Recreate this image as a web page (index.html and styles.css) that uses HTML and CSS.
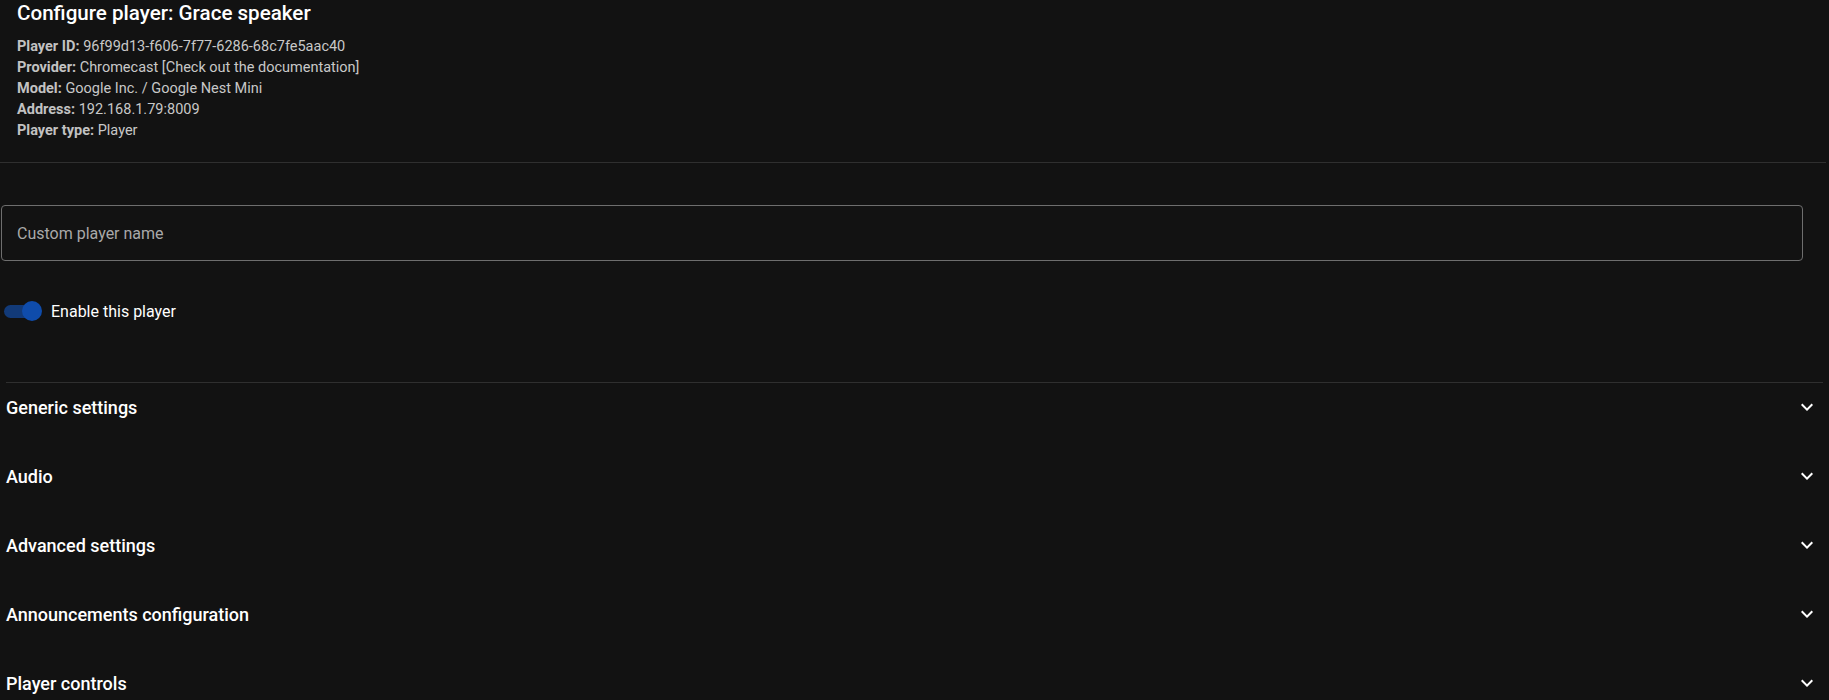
FILE: index.html
```html
<!DOCTYPE html>
<html lang="en">
<head>
<meta charset="utf-8">
<title>Configure player</title>
<link rel="stylesheet" href="styles.css">
</head>
<body>
<main class="page">
  <header class="player-head">
    <h1 class="title">Configure player: Grace speaker</h1>
    <div class="meta">
      <div class="meta-line"><b>Player ID:</b> 96f99d13-f606-7f77-6286-68c7fe5aac40</div>
      <div class="meta-line"><b>Provider:</b> Chromecast [Check out the documentation]</div>
      <div class="meta-line"><b>Model:</b> Google Inc. / Google Nest Mini</div>
      <div class="meta-line"><b>Address:</b> 192.168.1.79:8009</div>
      <div class="meta-line"><b>Player type:</b> Player</div>
    </div>
  </header>
  <hr class="divider">
  <section class="form">
    <div class="field"><span class="placeholder">Custom player name</span></div>
    <div class="switch-row">
      <span class="switch"><span class="track"></span><span class="thumb"></span></span>
      <span class="switch-label">Enable this player</span>
    </div>
  </section>
  <div class="panels">
    <div class="panel"><div class="panel-title"><span>Generic settings</span><svg class="chev" viewBox="0 0 24 24"><path d="M7.41,8.58L12,13.17L16.59,8.58L18,10L12,16L6,10L7.41,8.58Z"/></svg></div></div>
    <div class="panel"><div class="panel-title"><span>Audio</span><svg class="chev" viewBox="0 0 24 24"><path d="M7.41,8.58L12,13.17L16.59,8.58L18,10L12,16L6,10L7.41,8.58Z"/></svg></div></div>
    <div class="panel"><div class="panel-title"><span>Advanced settings</span><svg class="chev" viewBox="0 0 24 24"><path d="M7.41,8.58L12,13.17L16.59,8.58L18,10L12,16L6,10L7.41,8.58Z"/></svg></div></div>
    <div class="panel"><div class="panel-title"><span>Announcements configuration</span><svg class="chev" viewBox="0 0 24 24"><path d="M7.41,8.58L12,13.17L16.59,8.58L18,10L12,16L6,10L7.41,8.58Z"/></svg></div></div>
    <div class="panel"><div class="panel-title"><span>Player controls</span><svg class="chev" viewBox="0 0 24 24"><path d="M7.41,8.58L12,13.17L16.59,8.58L18,10L12,16L6,10L7.41,8.58Z"/></svg></div></div>
  </div>
</main>
</body>
</html>
```
FILE: styles.css
```css
html, body {
  margin: 0;
  padding: 0;
  background: #121212;
  color: #fff;
  font-family: Roboto, "Liberation Sans", sans-serif;
  overflow: hidden;
}
.page {
  width: 1829px;
  height: 700px;
}
.player-head {
  padding: 1px 0 0 17px;
}
.title {
  margin: 0;
  font-size: 20.6px;
  line-height: 24px;
  font-weight: 500;
  color: #fff;
}
.meta {
  margin-top: 11px;
  font-size: 14.5px;
  line-height: 21px;
  color: #c8c8c8;
}
.meta b {
  font-weight: 700;
  color: #c2c2c2;
}
.divider {
  border: 0;
  border-top: 1px solid #2f2f2f;
  margin: 21px 3px 0 0;
  height: 0;
}
.form {
  padding: 42px 26px 0 1px;
}
.field {
  height: 54px;
  border: 1px solid #6e6e6e;
  border-radius: 4px;
  display: flex;
  align-items: center;
  padding: 0 15px;
}
.placeholder {
  font-size: 16px;
  color: #a9a9a9;
}
.switch-row {
  margin-top: 30px;
  height: 40px;
  display: flex;
  align-items: center;
  gap: 9px;
  padding-left: 3px;
}
.switch {
  position: relative;
  width: 38px;
  height: 20px;
  display: flex;
  align-items: center;
}
.track {
  width: 36px;
  height: 13px;
  border-radius: 7px;
  background: #123a78;
}
.thumb {
  position: absolute;
  left: 18px;
  top: 0;
  width: 20px;
  height: 20px;
  border-radius: 50%;
  background: #0f4cab;
}
.switch-label {
  font-size: 16px;
  color: #fff;
}
.panels {
  margin: 51px 6px 0 6px;
  border-top: 1px solid #2f2f2f;
}
.panel {
  margin-bottom: 21px;
}
.panel-title {
  height: 48px;
  display: flex;
  align-items: center;
  justify-content: space-between;
  padding-right: 4px;
  font-size: 18px;
  font-weight: 500;
  color: #fff;
}
.chev {
  width: 24px;
  height: 24px;
  fill: #fff;
}
```
